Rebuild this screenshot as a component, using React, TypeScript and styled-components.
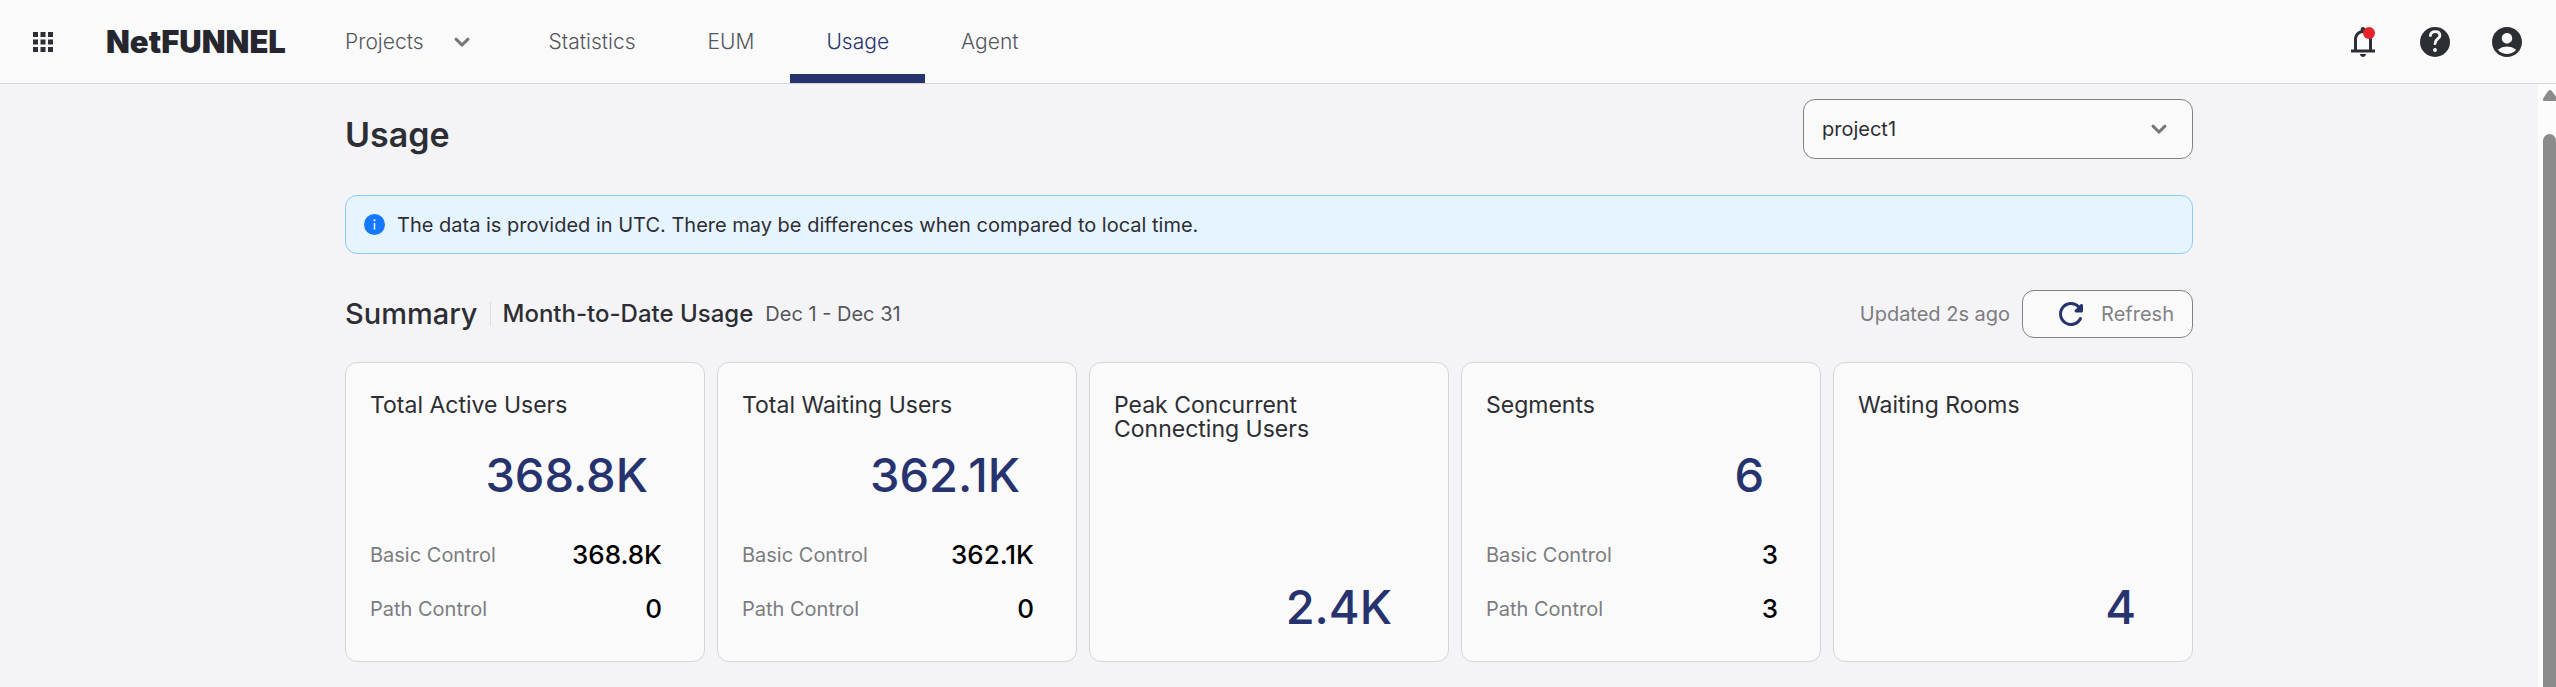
import React from "react";
import styled, { createGlobalStyle } from "styled-components";
import { MdAccountCircle, MdApps } from "react-icons/md";

const GlobalStyle = createGlobalStyle`
  *, *::before, *::after { box-sizing: border-box; }
  body {
    margin: 0;
    background: #f4f4f7;
    color: #2d2e33;
    font-family: Inter, "Open Sans", sans-serif;
    font-size: 20px;
    font-weight: 400;
    line-height: 24px;
  }
  h1, h2, h3, p, dl, dt, dd { margin: 0; }
  button, select { font: inherit; }
`;

const Page = styled.div`
  display: flex;
  flex-direction: column;
  height: 100vh;
  overflow: hidden;
`;

const Header = styled.header`
  display: flex;
  align-items: stretch;
  flex: none;
  height: 84px;
  padding: 0 28px;
  background: #fafafa;
  border-bottom: 1px solid #d4d5d8;
`;

const IconButton = styled.button`
  position: relative;
  display: flex;
  align-items: center;
  padding: 0;
  border: 0;
  background: none;
  color: #2d2e33;
  cursor: pointer;
`;

const Brand = styled.a`
  display: flex;
  align-items: center;
  width: 238px;
  margin-left: 48px;
  margin-right: 1px;
  color: #26262f;
  font-size: 31px;
  font-weight: 900;
  line-height: 36px;
  text-decoration: none;
`;

const Nav = styled.nav`
  display: flex;
  flex: 1;
  font-size: 21px;
  font-weight: 300;
`;

const ProjectsButton = styled.button`
  display: flex;
  align-items: center;
  gap: 29px;
  padding: 0 42px 0 0;
  border: 0;
  background: none;
  color: #55565b;
  cursor: pointer;
`;

const Tab = styled.a<{ $active?: boolean }>`
  display: flex;
  align-items: center;
  padding: 0 36px;
  color: ${(p) => (p.$active ? "#27336e" : "#55565b")};
  box-shadow: ${(p) => (p.$active ? "inset 0 -9px #27336e" : "none")};
  text-decoration: none;
`;

const Actions = styled.div`
  display: flex;
  gap: 36px;
  margin-right: 3px;
`;

const Dot = styled.span`
  position: absolute;
  top: 27px;
  right: 6px;
  width: 12px;
  height: 12px;
  border-radius: 50%;
  background: #e3242b;
`;

const Body = styled.div`
  display: flex;
  flex: 1;
  min-height: 0;
`;

const Main = styled.main`
  flex: 1;
  display: flex;
  justify-content: center;
  padding: 15px 24px 24px;
`;

const Content = styled.div`
  width: 100%;
  max-width: 1848px;
`;

const TitleRow = styled.div`
  display: flex;
  justify-content: space-between;
  margin-bottom: 36px;
`;

const Title = styled.h1`
  padding-top: 14px;
  font-size: 34px;
  line-height: 44px;
  font-weight: 600;
`;

const SelectBox = styled.div`
  display: grid;
  align-items: center;
  width: 390px;
  & > * { grid-area: 1 / 1; }
  & > svg { justify-self: end; margin-right: 25px; pointer-events: none; }
`;

const Select = styled.select`
  appearance: none;
  width: 100%;
  height: 60px;
  padding: 0 18px;
  border: 1px solid #818286;
  border-radius: 12px;
  background: #fafafa;
  color: #2d2e33;
`;

const Notice = styled.p`
  display: flex;
  align-items: center;
  gap: 12px;
  height: 59px;
  padding: 0 18px;
  border: 1px solid #91caff;
  border-radius: 12px;
  background: #e6f4ff;
  color: #2d2e33;
`;

const SummaryRow = styled.div`
  display: flex;
  align-items: center;
  margin: 36px 0 24px;
`;

const SummaryTitle = styled.h2`
  padding-right: 12px;
  font-size: 29px;
  line-height: 36px;
  font-weight: 500;
`;

const Period = styled.h3`
  display: flex;
  align-items: center;
  height: 24px;
  padding: 0 12px;
  border-left: 1px solid #dcdde0;
  font-size: 24px;
  font-weight: 500;
`;

const Dates = styled.span`
  flex: 1;
  color: #55565b;
`;

const Updated = styled.span`
  margin-right: 12px;
  color: #7c7d81;
`;

const RefreshButton = styled.button`
  display: flex;
  align-items: center;
  gap: 12px;
  height: 48px;
  padding: 0 18px 0 30px;
  border: 1px solid #818286;
  border-radius: 12px;
  background: #fafafa;
  color: #818286;
  cursor: pointer;
  & > svg { color: #27336e; }
`;

const Cards = styled.div`
  display: grid;
  grid-template-columns: repeat(5, minmax(0, 1fr));
  gap: 12px;
`;

const Card = styled.section`
  display: flex;
  flex-direction: column;
  min-height: 300px;
  padding: 30px 24px 24px;
  border: 1px solid #d4d5da;
  border-radius: 12px;
  background: #fafafa;
`;

const CardTitle = styled.h3`
  width: 240px;
  font-size: 23px;
  font-weight: 400;
`;

const Total = styled.p<{ $bottom?: boolean }>`
  margin-top: ${(p) => (p.$bottom ? "auto" : "28px")};
  padding-right: 32px;
  color: #27336e;
  font-size: 47px;
  line-height: 60px;
  font-weight: 500;
  text-align: right;
`;

const Breakdown = styled.dl`
  display: grid;
  gap: 24px;
  margin-top: 35px;
  padding-right: 18px;
`;

const BreakdownRow = styled.div`
  display: flex;
  justify-content: space-between;
  align-items: center;
  line-height: 30px;
  & dt { color: #7c7d81; }
  & dd { color: #000; font-size: 26px; font-weight: 500; }
`;

const ScrollTrack = styled.div`
  display: flex;
  flex-direction: column;
  flex: none;
  gap: 33px;
  width: 18px;
  padding: 6px 0 0 5px;
  background: #fcfcfc;
`;

const ScrollThumb = styled.div`
  flex: 1;
  border-radius: 7px 7px 0 0;
  background: #8b8b8b;
`;

const Chevron = () => (
  <svg width="18" height="18" viewBox="0 0 18 18" fill="none" stroke="#75767a" strokeWidth="3" strokeLinecap="round" aria-hidden="true">
    <path d="M3 6.2 9 12 15 6.2" />
  </svg>
);

const BellIcon = () => (
  <svg width="36" height="36" viewBox="0 -960 960 960" fill="currentColor" aria-hidden="true">
    <path d="M160-200v-80h80v-280q0-83 50-147.5T420-792v-28q0-25 17.5-42.5T480-880t42.5 17.5T540-820v28q80 20 130 84.5T720-560v280h80v80H160Zm320 120q-33 0-56.5-23.5T400-160h160q0 33-23.5 56.5T480-80ZM320-280h320v-280q0-66-47-113t-113-47q-66 0-113 47t-47 113v280Z" />
  </svg>
);

const HelpIcon = () => (
  <svg width="36" height="36" viewBox="0 -960 960 960" fill="currentColor" aria-hidden="true">
    <path d="M480-880a400 400 0 1 0 0 800 400 400 0 0 0 0-800Z" />
    <path d="M355-650q22-105 130-105 125 0 125 105c0 85-130 85-130 215" fill="none" stroke="#fafafa" strokeWidth="76" strokeLinecap="round" />
    <circle cx="480" cy="-265" r="52" fill="#fafafa" />
  </svg>
);

const RefreshIcon = () => (
  <svg width="36" height="36" viewBox="0 0 24 24" fill="currentColor" aria-hidden="true">
    <path d="M17.65 6.35c-1.63-1.63-3.94-2.57-6.48-2.31-3.67.37-6.69 3.35-7.1 7.02C3.52 15.91 7.27 20 12 20c3.19 0 5.93-1.87 7.21-4.56.32-.67-.16-1.44-.9-1.44-.37 0-.72.2-.88.53-1.13 2.43-3.84 3.97-6.8 3.31-2.22-.49-4.01-2.3-4.48-4.52C5.31 9.44 8.26 6 12 6c1.66 0 3.14.69 4.22 1.78l-1.51 1.51c-.63.63-.19 1.71.7 1.71H19c.55 0 1-.45 1-1V6.41c0-.89-1.08-1.34-1.71-.71l-.64.65z" />
  </svg>
);

const InfoIcon = () => (
  <svg width="21" height="21" viewBox="0 0 21 21" aria-hidden="true">
    <circle cx="10.5" cy="10.5" r="10.5" fill="#1677ff" />
    <circle cx="10.5" cy="6.3" r="1.1" fill="#e6f4ff" />
    <path d="M10.5 9v6.7" stroke="#e6f4ff" strokeWidth="1.5" />
  </svg>
);

type Metric = { title: string; total: string; parts?: [string, string][] };

const metrics: Metric[] = [
  { title: "Total Active Users", total: "368.8K", parts: [["Basic Control", "368.8K"], ["Path Control", "0"]] },
  { title: "Total Waiting Users", total: "362.1K", parts: [["Basic Control", "362.1K"], ["Path Control", "0"]] },
  { title: "Peak Concurrent Connecting Users", total: "2.4K" },
  { title: "Segments", total: "6", parts: [["Basic Control", "3"], ["Path Control", "3"]] },
  { title: "Waiting Rooms", total: "4" },
];

const MetricCard = ({ title, total, parts }: Metric) => (
  <Card>
    <CardTitle>{title}</CardTitle>
    <Total $bottom={!parts}>{total}</Total>
    {parts && (
      <Breakdown>
        {parts.map(([label, value]) => (
          <BreakdownRow key={label}>
            <dt>{label}</dt>
            <dd>{value}</dd>
          </BreakdownRow>
        ))}
      </Breakdown>
    )}
  </Card>
);

export default function App() {
  return (
    <Page>
      <GlobalStyle />
      <Header>
        <IconButton aria-label="Apps"><MdApps size={30} /></IconButton>
        <Brand href="#">NetFUNNEL</Brand>
        <Nav>
          <ProjectsButton>Projects<Chevron /></ProjectsButton>
          <Tab href="#statistics">Statistics</Tab>
          <Tab href="#eum">EUM</Tab>
          <Tab href="#usage" $active aria-current="page">Usage</Tab>
          <Tab href="#agent">Agent</Tab>
        </Nav>
        <Actions>
          <IconButton aria-label="Notifications"><BellIcon /><Dot /></IconButton>
          <IconButton aria-label="Help"><HelpIcon /></IconButton>
          <IconButton aria-label="Account"><MdAccountCircle size={36} /></IconButton>
        </Actions>
      </Header>
      <Body>
        <Main>
          <Content>
            <TitleRow>
              <Title>Usage</Title>
              <SelectBox>
                <Select aria-label="Project" defaultValue="project1">
                  <option value="project1">project1</option>
                </Select>
                <Chevron />
              </SelectBox>
            </TitleRow>
            <Notice>
              <InfoIcon />
              The data is provided in UTC. There may be differences when compared to local time.
            </Notice>
            <SummaryRow>
              <SummaryTitle>Summary</SummaryTitle>
              <Period>Month-to-Date Usage</Period>
              <Dates>Dec 1 - Dec 31</Dates>
              <Updated>Updated 2s ago</Updated>
              <RefreshButton><RefreshIcon />Refresh</RefreshButton>
            </SummaryRow>
            <Cards>
              {metrics.map((m) => <MetricCard key={m.title} {...m} />)}
            </Cards>
          </Content>
        </Main>
        <ScrollTrack aria-hidden="true">
          <svg width="13" height="11" viewBox="0 0 13 11" fill="#8b8b8b">
            <path d="M5 1.2Q7 -1 9 1.2L15 9Q15 11 13 11H1Q-1 10.5 0 8.5Z" />
          </svg>
          <ScrollThumb />
        </ScrollTrack>
      </Body>
    </Page>
  );
}
